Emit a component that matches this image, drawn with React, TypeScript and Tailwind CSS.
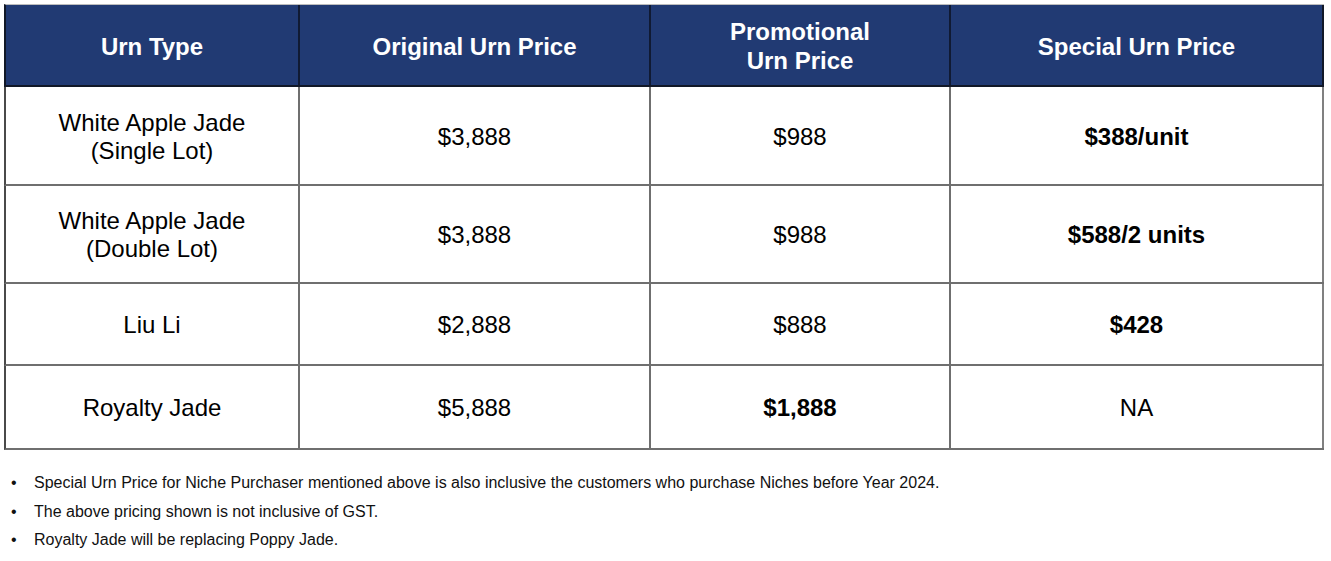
const font = { fontFamily: '"Liberation Sans", Arial, sans-serif' };

type Row = {
  type: string[];
  original: string;
  promo: string;
  promoBold?: boolean;
  special: string;
  specialBold?: boolean;
  h: string;
};

const rows: Row[] = [
  { type: ["White Apple Jade", "(Single Lot)"], original: "$3,888", promo: "$988", special: "$388/unit", specialBold: true, h: "h-[99px]" },
  { type: ["White Apple Jade", "(Double Lot)"], original: "$3,888", promo: "$988", special: "$588/2 units", specialBold: true, h: "h-[98px]" },
  { type: ["Liu Li"], original: "$2,888", promo: "$888", special: "$428", specialBold: true, h: "h-[82px]" },
  { type: ["Royalty Jade"], original: "$5,888", promo: "$1,888", promoBold: true, special: "NA", h: "h-[84px]" },
];

const notes = [
  "Special Urn Price for Niche Purchaser mentioned above is also inclusive the customers who purchase Niches before Year 2024.",
  "The above pricing shown is not inclusive of GST.",
  "Royalty Jade will be replacing Poppy Jade.",
];

const widths = ["w-[296px]", "w-[351px]", "w-[300px]", "w-[373px]"];

export default function App() {
  return (
    <div className="w-[1331px] h-[561px] bg-white pl-[4px] pt-[4px] text-black" style={font}>
      {/* header */}
      <div className="flex h-[83px] w-[1320px] bg-[#213a73] border-t border-t-[#bdbdbd] border-b-2 border-b-[#111827] border-l-2 border-l-[#111827] text-white font-bold text-[24px] leading-[29px]">
        <div className={`${widths[0]} -ml-[2px] pl-[2px] pt-[2px] flex items-center justify-center border-r-2 border-r-[#101a33]`}>Urn Type</div>
        <div className={`${widths[1]} pt-[2px] flex items-center justify-center border-r-2 border-r-[#101a33]`}>Original Urn Price</div>
        <div className={`${widths[2]} pt-[2px] flex items-center justify-center text-center border-r-2 border-r-[#101a33]`}>
          Promotional
          <br />
          Urn Price
        </div>
        <div className={`${widths[3]} pt-[2px] flex items-center justify-center border-r-2 border-r-[#111827]`}>Special Urn Price</div>
      </div>

      {/* body */}
      <div className="w-[1320px] text-[24px] leading-[28px]">
        {rows.map((r, i) => (
          <div key={i} className={`flex ${r.h} border-b-2 border-b-[#6f6f6f] border-l-2 border-l-[#4a4a4a]`}>
            <div className={`${widths[0]} -ml-[2px] pl-[2px] pt-[2px] flex flex-col items-center justify-center text-center border-r-2 border-r-[#6f6f6f]`}>
              {r.type.map((t) => (
                <span key={t}>{t}</span>
              ))}
            </div>
            <div className={`${widths[1]} pt-[2px] flex items-center justify-center border-r-2 border-r-[#6f6f6f]`}>{r.original}</div>
            <div className={`${widths[2]} pt-[2px] flex items-center justify-center border-r-2 border-r-[#6f6f6f] ${r.promoBold ? "font-bold" : ""}`}>
              {r.promo}
            </div>
            <div className={`${widths[3]} pt-[2px] flex items-center justify-center border-r-2 border-r-[#808080] ${r.specialBold ? "font-bold" : ""}`}>
              {r.special}
            </div>
          </div>
        ))}
      </div>

      {/* notes */}
      <ul className="mt-[19px] pl-[7px] text-[16px] leading-[28.5px] text-[#111]">
        {notes.map((n) => (
          <li key={n} className="flex">
            <span className="w-[23px] shrink-0">•</span>
            <span>{n}</span>
          </li>
        ))}
      </ul>
    </div>
  );
}
